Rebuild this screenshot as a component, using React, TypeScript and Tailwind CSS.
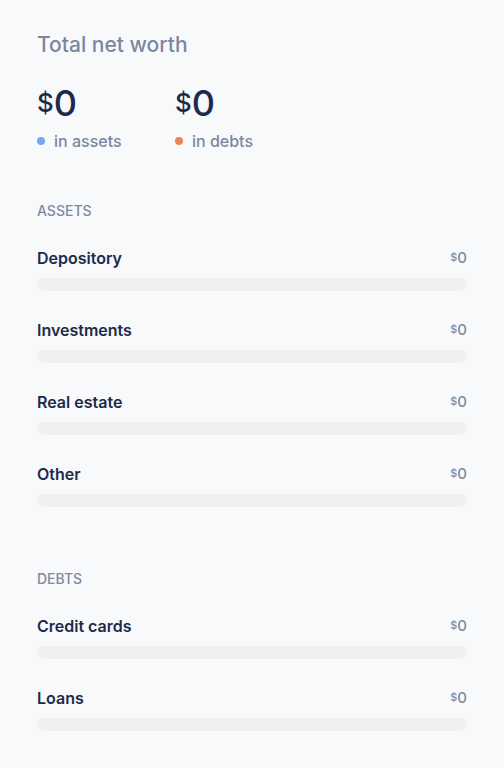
import React from 'react'

const assets = [
  { name: "Depository", amount: 0 },
  { name: "Investments", amount: 0 },
  { name: "Real estate", amount: 0 },
  { name: "Other", amount: 0 },
];

const debts = [
  { name: "Credit cards", amount: 0 },
  { name: "Loans", amount: 0 },
];

const Row = ({ name, amount }: { name: string; amount: number }) => (
  <div className="mb-[27px]">
    <div className="flex items-center justify-between h-6">
      <span className="text-[16px] font-semibold text-[#1c2b4b]">{name}</span>
      <span className="text-[15px] font-medium text-[#7f89a1]">
        <span className="text-[0.72em] align-[0.18em]">$</span>{amount}
      </span>
    </div>
    <div className="mt-2 h-[13px] rounded-full bg-[#eff0f2]" />
  </div>
);

export default function App() {
  return (
    <div className="min-h-screen bg-[#f8f9fb] px-[37px] pt-[31px]" style={{ fontFamily: "Inter, 'Noto Sans', sans-serif" }}>
      <h2 className="text-[21px] leading-7 font-medium text-[#7b87a0]">Total net worth</h2>

      <div className="flex mt-6">
        <div className="w-[138px]">
          <div className="text-[36px] leading-10 font-medium text-[#1c2b4b]">
            <span className="text-[0.72em] align-[0.14em]">$</span>0
          </div>
          <div className="flex items-center mt-1.5 h-6">
            <span className="w-2 h-2 rounded-full bg-[#72a7f1] mr-[9px]" />
            <span className="text-[16px] font-medium text-[#7b87a0]">in assets</span>
          </div>
        </div>
        <div>
          <div className="text-[36px] leading-10 font-medium text-[#1c2b4b]">
            <span className="text-[0.72em] align-[0.14em]">$</span>0
          </div>
          <div className="flex items-center mt-1.5 h-6">
            <span className="w-2 h-2 rounded-full bg-[#e8875a] mr-[9px]" />
            <span className="text-[16px] font-medium text-[#7b87a0]">in debts</span>
          </div>
        </div>
      </div>

      <div className="mt-12 text-[14px] leading-5 font-medium uppercase text-[#8089a0]">Assets</div>
      <div className="mt-[25px]">
        {assets.map((a) => (
          <Row key={a.name} name={a.name} amount={a.amount} />
        ))}
      </div>

      <div className="mt-[62px] text-[14px] leading-5 font-medium uppercase text-[#8089a0]">Debts</div>
      <div className="mt-[25px]">
        {debts.map((d) => (
          <Row key={d.name} name={d.name} amount={d.amount} />
        ))}
      </div>
    </div>
  );
}
